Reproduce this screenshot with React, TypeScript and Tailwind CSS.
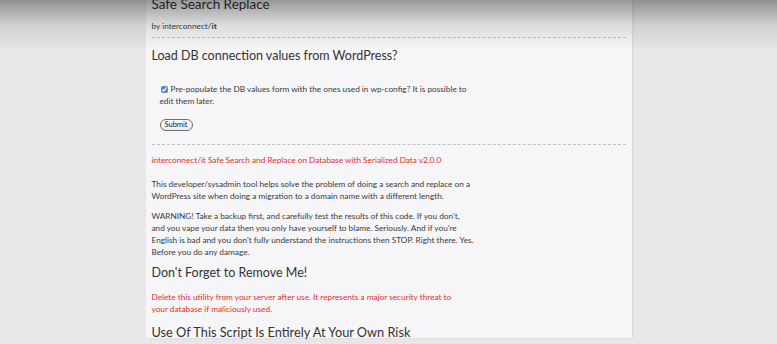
const App = () => {
  return (
    <div className="relative w-[777px] h-[344px] overflow-hidden bg-[#e8e6e9] font-['Lato','Open_Sans',sans-serif]">
      <div className="mx-auto w-[486px] h-full bg-[#f6f5f7] px-[6px] text-[#3a3a3a] shadow-[1px_0_2px_rgba(0,0,0,0.08)]">
        <h1 className="mt-[-6px] h-[20px] text-[13.5px] leading-[20px] font-normal text-[#333]">Safe Search Replace</h1>
        <p className="mt-[6px] h-[12px] text-[8.25px] leading-[12px]">
          by interconnect/<b>it</b>
        </p>
        <div className="mt-[5px] border-t border-dashed border-[#c2c2c2]" />
        <h2 className="mt-[8px] h-[20px] text-[12.5px] leading-[20px] font-normal text-[#333]">Load DB connection values from WordPress?</h2>
        <div className="mt-[17px] ml-[8px] text-[8.25px] leading-[12px]">
          <label className="flex items-center gap-[3px]">
            <input type="checkbox" defaultChecked className="w-[7px] h-[7px] m-0 ml-[1px] accent-[#5a84c4]" />
            <span>Pre-populate the DB values form with the ones used in wp-config? It is possible to</span>
          </label>
          <div>edit them later.</div>
        </div>
        <button className="mt-[12px] ml-[8px] h-[12px] w-[33px] rounded-full border border-[#6f6f6f] bg-gradient-to-b from-white to-[#ececec] text-[7.5px] leading-[10px] text-[#222]">
          Submit
        </button>
        <div className="mt-[11px] border-t border-dashed border-[#c2c2c2]" />
        <p className="mt-[9px] text-[8.25px] leading-[12px] text-[#e4302b]">
          interconnect/it Safe Search and Replace on Database with Serialized Data v2.0.0
        </p>
        <p className="mt-[12px] text-[8.25px] leading-[12px]">
          This developer/sysadmin tool helps solve the problem of doing a search and replace on a<br />
          WordPress site when doing a migration to a domain name with a different length.
        </p>
        <p className="mt-[8px] text-[8.25px] leading-[12px]">
          WARNING! Take a backup first, and carefully test the results of this code. If you don't,<br />
          and you vape your data then you only have yourself to blame. Seriously. And if you're<br />
          English is bad and you don't fully understand the instructions then STOP. Right there. Yes.<br />
          Before you do any damage.
        </p>
        <h2 className="mt-[5px] h-[20px] text-[12.5px] leading-[20px] font-normal text-[#333]">Don't Forget to Remove Me!</h2>
        <p className="mt-[8px] text-[8.25px] leading-[12px] text-[#e4302b]">
          Delete this utility from your server after use. It represents a major security threat to<br />
          your database if maliciously used.
        </p>
        <h2 className="mt-[7px] h-[20px] text-[12.75px] leading-[20px] font-normal text-[#333]">Use Of This Script Is Entirely At Your Own Risk</h2>
      </div>
      <div className="pointer-events-none absolute inset-x-0 top-0 h-[50px] bg-gradient-to-b from-[rgba(0,0,0,0.38)] via-[rgba(0,0,0,0.1)] to-transparent" />
    </div>
  );
};

export default App;
